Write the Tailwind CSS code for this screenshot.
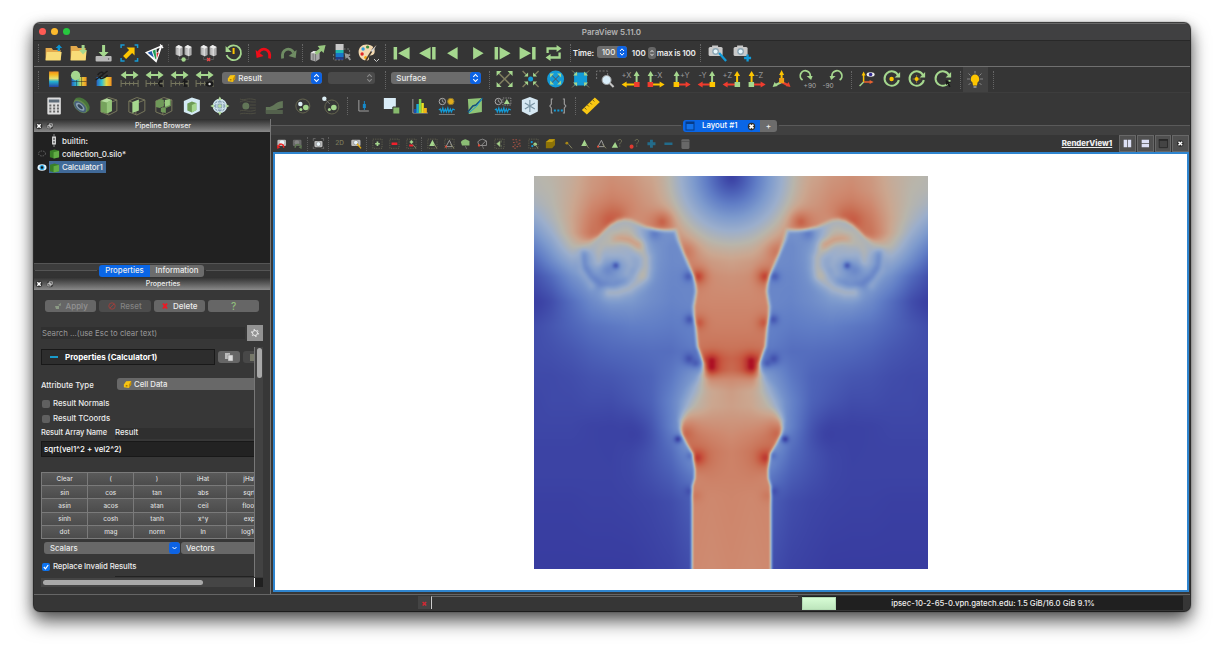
<!DOCTYPE html>
<html lang="en">
<head>
<meta charset="utf-8">
<title>ParaView 5.11.0</title>
<script src="https://cdn.jsdelivr.net/npm/@tailwindcss/browser@4"></script>
</head>
<body class="h-[656px] w-[1224px] overflow-hidden bg-white font-['Inter','Liberation_Sans',sans-serif] text-[8px] leading-none text-[#ececec]">
<svg class="absolute size-0">
<defs>
<linearGradient id="rb" x1="0" y1="0" x2="0" y2="1"><stop offset="0" stop-color="#f08a20"/><stop offset=".2" stop-color="#f5b820"/><stop offset=".45" stop-color="#e8e070"/><stop offset=".65" stop-color="#20b0d0"/><stop offset="1" stop-color="#2840a0"/></linearGradient>
<linearGradient id="rh" x1="0" y1="0" x2="1" y2="0"><stop offset="0" stop-color="#2860c0"/><stop offset=".35" stop-color="#30c0d0"/><stop offset=".65" stop-color="#e8d840"/><stop offset="1" stop-color="#f09020"/></linearGradient>
<symbol id="open" viewBox="0 0 20 20"><path d="M2 5h6l1.500 2H17v10H2z" fill="#e3a94c"/><path d="M3 9h15l-1 8.500H2z" fill="#f8dc78"/><path d="M15.500 1.500l3 3.500h-2v3h-2.500V5h-2z" fill="#0c93d2"/></symbol>
<symbol id="load" viewBox="0 0 20 20"><path d="M2 3h6l1.500 2H17v12H2z" fill="#e3a94c"/><path d="M3 8h15l-1 9.500H2z" fill="#f8dc78"/><path d="M13 2h3v5h2.500l-4 4.500-4-4.500H13z" fill="#a5d78e"/></symbol>
<symbol id="save" viewBox="0 0 20 20"><rect x="2" y="13" width="16" height="5.500" rx="1" fill="#b9b9b9"/><circle cx="15" cy="16" r=".8" fill="#555"/><path d="M8.500 2h3v7H15l-5 5-5-5h3.500z" fill="#a5d78e"/></symbol>
<symbol id="capt" viewBox="0 0 20 20"><path d="M1.500 5V2H5M15 2h3v3M18 15v3h-3M5 18H1.500v-3" fill="none" stroke="#179bd4" stroke-width="1.500"/><path d="M7 4.500h8v8l-2.500-2.500-6 6L3.500 13l6-6z" fill="#fdc500"/></symbol>
<symbol id="logo" viewBox="0 0 20 20"><path d="M1.500 9.500L17 3l-5.500 15.500z" fill="#f2f2f2" stroke="#fff" stroke-width="1.300"/><path d="M3 9.800L7 8l2.200 6.500z" fill="#1c55a5"/><path d="M8 7.800l2.900-1.200.8 10-1-.8z" fill="#1d9e56"/><path d="M12 6l3-1-1.700 4.200-1.200.2z" fill="#222"/><path d="M12 10l.2 5.500 2-6z" fill="#d52b2b"/><path d="M15.500 1.500l3 3.500" stroke="#fff" stroke-width="1.200"/></symbol>
<symbol id="serv" viewBox="0 0 20 20"><path d="M2 4l3-2 4 2v8l-3 1.500-4-2zM11 4l3-2 4 2v8l-3 1.500-4-2z" fill="#aeaeae"/><path d="M2 4l4 2 3-2-4-2zM11 4l4 2 3-2-4-2z" fill="#eee"/><path d="M4.500 6v6M6 6v7M13.500 6v6M15 6v7" stroke="#ddd"/><path d="M5 14v2.500h10V14" fill="none" stroke="#555"/></symbol>
<symbol id="conn" viewBox="0 0 20 20"><use href="#serv"/><circle cx="10" cy="16.500" r="2.200" fill="#a5d78e"/></symbol>
<symbol id="disc" viewBox="0 0 20 20"><use href="#serv"/><path d="M8.500 15l3 3M11.500 15l-3 3" stroke="#e74949" stroke-width="1.500"/></symbol>
<symbol id="hist" viewBox="0 0 20 20"><path d="M4.200 5.200A7.400 7.400 0 1 1 3 12" fill="none" stroke="#a5d78e" stroke-width="1.800"/><path d="M2 3v6h6z" fill="#a5d78e"/><path d="M10 5v6" stroke="#fdc500" stroke-width="2"/></symbol>
<symbol id="undo" viewBox="0 0 20 20"><path d="M5 9.500C8 4 17.500 5 16 15.500" fill="none" stroke="#f00c18" stroke-width="2.800"/><path d="M2 7l1 8 7-2z" fill="#f00c18"/></symbol>
<symbol id="redo" viewBox="0 0 20 20"><path d="M15 9.500C12 4 2.500 5 4 15.500" fill="none" stroke="#6f8c63" stroke-width="2.800"/><path d="M18 7l-1 8-7-2z" fill="#6f8c63"/></symbol>
<symbol id="extr" viewBox="0 0 20 20"><path d="M3 10l3-2 6 1v7l-4 2.500-5-1.500z" fill="#a9a9a9"/><path d="M3 10l3-2 6 1-4 1.500z" fill="#e8e8e8"/><path d="M5.500 10.500v7M8 11v7" stroke="#777"/><path d="M10 3l8-1-2 8-2-2-5 4-2-2.500 5-4z" fill="#97c67f"/></symbol>
<symbol id="sel" viewBox="0 0 20 20"><path d="M3 1h8v6H3z" fill="#c9c9c9"/><path d="M3 7h8v3H3z" fill="#20b8b0"/><path d="M3 10h8v4H3z" fill="#1876c8"/><path d="M3 14h8v3H3z" fill="#243d85"/><path d="M11 6h6v10M1 11v6h9" stroke="#777" fill="none" stroke-dasharray="2 1.500"/><path d="M12 10l6 2-2 1.500 2.500 3-1.500 1-2.500-3-1.500 1.500z" fill="#999"/></symbol>
<symbol id="pal" viewBox="0 0 20 20"><path d="M9 1.500c6 0 9 4 8 8s-5 2-5.500 4 1 4-3 4C4 17.500 1 13 1 9s3-7.500 8-7.500z" fill="#f3d9b1"/><circle cx="5.500" cy="6" r="1.700" fill="#2e9ee0"/><circle cx="10" cy="4" r="1.600" fill="#3e8f3e"/><circle cx="4.500" cy="11" r="1.700" fill="#e02626"/><circle cx="8" cy="14.500" r="1.500" fill="#f0a010"/><path d="M18 2l-7 11-3 5" stroke="#463b30" stroke-width="1.500"/><path d="M19 2l-4 7-2-1z" fill="#ddd"/></symbol>
<symbol id="first" viewBox="0 0 20 20"><path d="M2 4h3.500v12.500H2zM18 4v12.500L6.500 10.300z" fill="#a5d78e"/></symbol>
<symbol id="back" viewBox="0 0 20 20"><path d="M14.500 4h3.500v12.500h-3.500zM13 4v12.500L1.500 10.300z" fill="#a5d78e"/></symbol>
<symbol id="prev" viewBox="0 0 20 20"><path d="M15 4v12.500L4.500 10.300z" fill="#a5d78e"/></symbol>
<symbol id="play" viewBox="0 0 20 20"><path d="M5.500 4v12.500L16 10.300z" fill="#a5d78e"/></symbol>
<symbol id="fwd" viewBox="0 0 20 20"><path d="M2 4h3.500v12.500H2zM7 4v12.500l11-6.200z" fill="#a5d78e"/></symbol>
<symbol id="last" viewBox="0 0 20 20"><path d="M14.500 4H18v12.500h-3.500zM2 4v12.500l11.500-6.200z" fill="#a5d78e"/></symbol>
<symbol id="loop" viewBox="0 0 20 20"><path d="M4 10V5.500H14M16 9.500V14.500H6" fill="none" stroke="#a5d78e" stroke-width="2.300"/><path d="M13 2l5 3.500L13 9zM7 11l-5 3.500L7 18z" fill="#a5d78e"/></symbol>
<symbol id="cam" viewBox="0 0 20 20"><rect x="1" y="4" width="14" height="9" rx="1.500" fill="#c9c9c9"/><rect x="4.500" y="2.500" width="6" height="3" fill="#c9c9c9"/><circle cx="8" cy="8.500" r="3.400" fill="#8ea7b5"/><circle cx="8" cy="8.500" r="2" fill="#e7f7fc"/></symbol>
<symbol id="camw" viewBox="0 0 20 20"><use href="#cam"/><path d="M11.500 10l7 8" stroke="#129bd8" stroke-width="2.300"/></symbol>
<symbol id="camp" viewBox="0 0 20 20"><use href="#cam"/><path d="M15 11.500v7M11.500 15h7" stroke="#129bd8" stroke-width="2.300"/></symbol>
<symbol id="cbar" viewBox="0 0 20 20"><rect x="5.500" y="2.500" width="9.500" height="15.500" fill="url(#rb)"/></symbol>
<symbol id="cedit" viewBox="0 0 20 20"><path d="M3 8h15v9H3z" fill="url(#rh)"/><path d="M3 12.500h15M8 8v9M13 8v9" stroke="#222" stroke-width=".5"/><circle cx="7" cy="6.500" r="4.700" fill="#a5d78e"/></symbol>
<symbol id="csep" viewBox="0 0 20 20"><path d="M3 8h15v9H3z" fill="url(#rh)"/><path d="M2 11l12-9M4 6c4-5 8-2 4 1s1 4 6-1" stroke="#1c1c1c" stroke-width="1.500" fill="none"/></symbol>
<symbol id="resc" viewBox="0 0 20 20"><path d="M4 6h12" stroke="#a5d78e" stroke-width="2"/><path d="M6.500 2v8L1 6zM13.500 2v8L19 6z" fill="#a5d78e"/><path d="M1.500 11v7M1.500 14.500h17M18.500 11v7M6 12.500v4M10 12.500v4M14 12.500v4" stroke="#77775e" fill="none"/></symbol>
<symbol id="rescc" viewBox="0 0 20 20"><use href="#resc"/><path d="M18 12c-5-1-5 6 0 5" stroke="#191919" stroke-width="1.800" fill="none"/></symbol>
<symbol id="resct" viewBox="0 0 20 20"><use href="#resc"/><path d="M15 10v7h3M13 12.500h5" stroke="#191919" stroke-width="1.700" fill="none"/></symbol>
<symbol id="rescv" viewBox="0 0 20 20"><use href="#resc"/><ellipse cx="15" cy="15" rx="4" ry="2.700" fill="#191919"/><circle cx="15" cy="15" r="1.200" fill="#ddd"/></symbol>
<symbol id="cube" viewBox="0 0 10 10"><path d="M1 5l2.500-3.500L9 1v4L6.500 9 1 8z" fill="#f8c513"/><path d="M6.500 9V5.300L9 1v4z" fill="#c78e05"/><path d="M3 5.500h2v1.800H3z" fill="#b07c00"/></symbol>
<symbol id="updn" viewBox="0 0 10 10"><path d="M3 4l2-2.200L7 4M3 6l2 2.200L7 6" fill="none" stroke="#fff" stroke-width="1"/></symbol>
<symbol id="updg" viewBox="0 0 10 10"><path d="M3 4l2-2.200L7 4M3 6l2 2.200L7 6" fill="none" stroke="#8a8a8a" stroke-width="1"/></symbol>
<symbol id="reset" viewBox="0 0 20 20"><path d="M4 4l12 12M16 4L4 16" stroke="#807e60" stroke-width="1.500"/><path d="M2 2h5L2 7zM18 2v5l-5-5zM2 18v-5l5 5zM18 18h-5l5-5z" fill="#a5d78e"/></symbol>
<symbol id="zdata" viewBox="0 0 20 20"><path d="M2 2l5 5M18 2l-5 5M2 18l5-5M18 18l-5-5" stroke="#807e60" stroke-width="1.400"/><path d="M7.500 7.500V3.500L3.500 7.500zM12.500 7.500h4l-4-4zM7.500 12.500h-4l4 4zM12.500 12.500v4l4-4z" fill="#a5d78e"/><circle cx="10" cy="10" r="2.500" fill="#139bd7"/></symbol>
<symbol id="rclose" viewBox="0 0 20 20"><circle cx="10" cy="10" r="8.500" fill="#139bd7"/><path d="M6 6l8 8M14 6l-8 8" stroke="#555"/><path d="M4.500 4.500h4l-4 4zM15.500 4.500v4l-4-4zM4.500 15.500v-4l4 4zM15.500 15.500h-4l4-4z" fill="#a5d78e"/></symbol>
<symbol id="zclose" viewBox="0 0 20 20"><rect x="3.500" y="3.500" width="13" height="13" fill="#139bd7"/><path d="M1.500 1.500l5 5M18.500 1.500l-5 5M1.500 18.500l5-5M18.500 18.500l-5-5" stroke="#807e60"/><path d="M6.500 6.500V2.500L2.500 6.500zM13.500 6.500h4l-4-4zM6.500 13.500h-4l4 4zM13.500 13.500v4l4-4z" fill="#a5d78e"/></symbol>
<symbol id="lens" viewBox="0 0 20 20"><path d="M1 10V2h11v4" fill="none" stroke="#777" stroke-dasharray="2 1.500"/><path d="M14 14l4 4" stroke="#c5c5c5" stroke-width="2"/><circle cx="11" cy="11" r="4.500" fill="#d9eefa" stroke="#a3a3a3"/></symbol>
<symbol id="tri" viewBox="0 0 20 20"><path d="M10 13V4" stroke="#fdc500" stroke-width="2"/><path d="M7.500 6L10 1l2.500 5z" fill="#fdc500"/><path d="M10 13l-6 3" stroke="#a5d78e" stroke-width="2.500"/><path d="M1 18l2-5 3 4z" fill="#a5d78e"/><path d="M10 13l6 3" stroke="#e9422d" stroke-width="2.500"/><path d="M19 18l-2-5-3 4z" fill="#e9422d"/><rect x="7.500" y="9" width="5" height="5" fill="#eea015"/></symbol>
<symbol id="rotp" viewBox="0 0 20 20"><path d="M5 11A5 5 0 1 1 12.500 8" fill="none" stroke="#a5d78e" stroke-width="1.800"/><path d="M9 7h6l-1.500 4z" fill="#a5d78e"/><text x="6" y="19" font-size="6.500" fill="#aaa" class="font-['Inter']">+90</text></symbol>
<symbol id="rotm" viewBox="0 0 20 20"><path d="M15 11A5 5 0 1 0 7.500 8" fill="none" stroke="#a5d78e" stroke-width="1.800" transform="translate(2)"/><path d="M13 7H7l1.500 4z" fill="#a5d78e"/><text x="0" y="19" font-size="6.500" fill="#aaa" class="font-['Inter']">-90</text></symbol>
<symbol id="axes" viewBox="0 0 20 20"><path d="M7 13V5" stroke="#fdc500" stroke-width="1.500"/><path d="M5 6.500l2-4 2 4z" fill="#fdc500"/><path d="M7 13h7" stroke="#e96030" stroke-width="1.500"/><path d="M13 11l4 2-4 2z" fill="#e96030"/><path d="M7 13l-4 4" stroke="#a5d78e" stroke-width="1.500"/><ellipse cx="14" cy="5.500" rx="4" ry="2.200" fill="#eee"/><circle cx="14" cy="5.500" r="1.800" fill="#302890"/></symbol>
<symbol id="circ" viewBox="0 0 20 20"><path d="M16.700 6.500A7.200 7.200 0 1 0 17.200 11" fill="none" stroke="#a5d78e" stroke-width="2"/><path d="M18.500 3v5.500H13z" fill="#a5d78e"/></symbol>
<symbol id="circd" viewBox="0 0 20 20"><use href="#circ"/><circle cx="10" cy="10" r="2.200" fill="#fdc500"/></symbol>
<symbol id="circc" viewBox="0 0 20 20"><use href="#circ"/><path d="M10 6v8M6 10h8" stroke="#8e7d3a"/><circle cx="10" cy="10" r="2" fill="#fdc500"/></symbol>
<symbol id="circp" viewBox="0 0 20 20"><use href="#circ"/><path d="M13 11l5.500 2.500-2 1 1.500 3-1.500.5-1.500-3-1.500 1z" fill="#181818"/></symbol>
<symbol id="bulb" viewBox="0 0 20 20"><path d="M10 1v2.500M2 9h3M15 9h3M3.500 3.500l2 2M16.500 3.500l-2 2M3.500 15l2-2M16.500 15l-2-2" stroke="#868686"/><path d="M10 4.500a4.500 4.500 0 0 1 2.500 8l-.5 3H8l-.5-3a4.500 4.500 0 0 1 2.500-8z" fill="#fdc500"/><path d="M8.500 16h3v2h-3z" fill="#888"/></symbol>
<symbol id="calc" viewBox="0 0 20 20"><rect x="3.500" y="1.500" width="13.500" height="17" rx="1" fill="#ddd"/><rect x="5" y="3.500" width="10.500" height="3" fill="#5d6b78"/><path d="M5.500 9.500h10M5.500 12.500h10M5.500 15.500h10" stroke="#666" stroke-width="2" stroke-dasharray="2 1.800"/></symbol>
<symbol id="cont" viewBox="0 0 20 20"><g transform="rotate(42 10 10)"><ellipse cx="10" cy="8.500" rx="9" ry="6" fill="#48753b"/><ellipse cx="10" cy="10.500" rx="8.500" ry="5" fill="#66884f"/><ellipse cx="10" cy="11" rx="7.300" ry="4" fill="#47617a"/><ellipse cx="10" cy="11" rx="5.200" ry="2.700" fill="#8ba2b2"/><ellipse cx="10" cy="11" rx="3.200" ry="1.500" fill="#345"/></g></symbol>
<symbol id="wire" viewBox="0 0 20 20"><path d="M2 5l8-3.500 8 2.500v11l-8 4L2 16zM2 5l7 2.500L18 4M9 7.500V19" fill="none" stroke="#77775c"/></symbol>
<symbol id="clip" viewBox="0 0 20 20"><use href="#wire"/><path d="M2 5l6-2.500L13 4v11l-5 2.500L2 16z" fill="#76a35d"/><path d="M2 5l6-2.500L13 4 8 6.500z" fill="#b5dc9f"/><path d="M8 6.500L13 4v11l-5 2.500z" fill="#96c67c"/></symbol>
<symbol id="slice" viewBox="0 0 20 20"><use href="#wire"/><path d="M5.500 6l6.500-2.500v11L5.500 17z" fill="#a5d78e"/></symbol>
<symbol id="thr" viewBox="0 0 20 20"><use href="#wire"/><path d="M2 5l5-2 3 1v6l-4 2-4-1zM11 6l6-2v6l-5 2zM7 12l5-1v6l-5-1z" fill="#6f9959"/><path d="M11 4l5-1v6l-5 2z" fill="#9acb80"/></symbol>
<symbol id="sub" viewBox="0 0 20 20"><path d="M2 5l8-3.500 8 2.500v11l-8 4L2 16z" fill="#d4eaf4"/><path d="M5.500 7.500l4.500-2 4.500 1.500V14L10 16.500 5.500 14.500z" fill="#6d9b55"/><path d="M10 9l4.500-2V14L10 16.500z" fill="#a5d78e"/></symbol>
<symbol id="glyph" viewBox="0 0 20 20"><circle cx="10" cy="10" r="7" fill="#8aa5b6"/><circle cx="10" cy="10" r="6.500" fill="none" stroke="#d6e8f0" stroke-width="1.300"/><ellipse cx="10" cy="10" rx="3" ry="6.500" fill="none" stroke="#d6e8f0"/><ellipse cx="10" cy="10" rx="6.500" ry="3" fill="none" stroke="#d6e8f0"/><path d="M10 .5l2 3.500H8zM10 19.500L12 16H8zM.5 10L4 8v4zM19.500 10L16 8v4z" fill="#b5dc9f"/><circle cx="10" cy="10" r="1.800" fill="#b5dc9f"/></symbol>
<symbol id="strm" viewBox="0 0 20 20"><path d="M2 3c5 2 8-2 16 1M2 6c2-1 5-2 7-1s5 1 9 1M12 9h6M12 12h6M2 15c5-2 8 2 16-1M2 18c6-2 8 1 16-1" fill="none" stroke="#505044" stroke-width=".9"/><circle cx="8" cy="10" r="3.500" fill="#627658"/></symbol>
<symbol id="warp" viewBox="0 0 20 20"><path d="M1 11c8 1 8-5 17-6v7c-6 0-9 6-17 5z" fill="#627658"/><path d="M1 14h17v4H1z" fill="#54614d"/></symbol>
<symbol id="grp" viewBox="0 0 20 20"><circle cx="10" cy="10" r="7" fill="none" stroke="#65654f"/><circle cx="7.500" cy="8" r="2.200" fill="#dceef5"/><circle cx="13" cy="11.500" r="2.800" fill="#a5d78e"/><circle cx="8" cy="13.500" r="1.500" fill="#a5d78e"/></symbol>
<symbol id="exl" viewBox="0 0 20 20"><circle cx="11" cy="11" r="7" fill="none" stroke="#65654f"/><path d="M4 3l5 5" stroke="#777"/><circle cx="3.500" cy="2.800" r="2.200" fill="#dceef5"/><circle cx="13" cy="11.500" r="2.800" fill="#a5d78e"/><circle cx="8.500" cy="13.500" r="1.500" fill="#a5d78e"/></symbol>
<symbol id="plot" viewBox="0 0 20 20"><path d="M5 4v11h10" fill="none" stroke="#aaa" stroke-width=".9"/><path d="M10.500 5v9" stroke="#168acb"/><path d="M9 8h3v4H9z" fill="#168acb"/></symbol>
<symbol id="over" viewBox="0 0 20 20"><path d="M2 2h12v11H2z" fill="#d9ecf7"/><path d="M11 11h7v7h-7z" fill="#86b96c" stroke="#363636"/></symbol>
<symbol id="bars" viewBox="0 0 20 20"><path d="M3 3v14h15" stroke="#999" fill="none"/><path d="M4 13h2.500v4H4z" fill="#1b50b0"/><path d="M6.500 8H9v9H6.500z" fill="#18a9d8"/><path d="M9 3h2.500v14H9z" fill="#85d850"/><path d="M11.500 7H14v10h-2.500z" fill="#e8e020"/><path d="M14 12h3v5h-3z" fill="#f5ae18"/></symbol>
<symbol id="wav" viewBox="0 0 20 20"><path d="M2 14l1.500-1 1 3 1.500-4 1 4 1.500-3 1 3 1.500-4 1 4 1.500-3 1 3 1.500-3 2 1" fill="none" stroke="#139bd7" stroke-width="1.200"/><path d="M2 18.500h16" stroke="#777"/><circle cx="5.500" cy="5.500" r="3.200" fill="none" stroke="#aaa"/><path d="M5.500 3.500v2l2 1" stroke="#aaa" fill="none" stroke-width=".8"/></symbol>
<symbol id="pot" viewBox="0 0 20 20"><use href="#wav"/><circle cx="14" cy="5.500" r="3.200" fill="#e1ac1c" stroke="#8b762c"/></symbol>
<symbol id="pots" viewBox="0 0 20 20"><use href="#wav"/><path d="M10 2h8v7h-8z" fill="none" stroke="#888" stroke-dasharray="1.500 1"/><path d="M14 3l3 5h-6z" fill="#a5d78e"/></symbol>
<symbol id="pol" viewBox="0 0 20 20"><path d="M3 3l14-1v14l-13 2z" fill="#8fc476"/><path d="M3 16l5-6 3-1 7-7" stroke="#164f7b" stroke-width="1.500" fill="none"/><path d="M4 17l8-7 5-7" stroke="#209cd5" fill="none"/></symbol>
<symbol id="hex" viewBox="0 0 20 20"><path d="M2 4L10 1l8 3v11.500L10 19.500 2 15.500z" fill="#d6e8f3"/><path d="M10 4v12M5 7l10 6M15 7L5 13" stroke="#7b96a6" stroke-width="1.200"/></symbol>
<symbol id="brace" viewBox="0 0 20 20"><path d="M5 3H3.500v5L2 10l1.500 2v5H5M15 3h1.500v5l1.500 2-1.500 2v5H15" fill="none" stroke="#999" stroke-width="1.200"/><path d="M6 14.500h9" stroke="#139bd7" stroke-width="2" stroke-dasharray="2 1.500"/></symbol>
<symbol id="ruler" viewBox="0 0 20 20"><path d="M14 1.500L19 6 6 18.500 1 14z" fill="#f8c713"/><path d="M3.500 11.500l2 2M6.500 9l1.500 1.500M9 6.500l2 2M12 4l1.500 1.500" stroke="#6b5914"/></symbol>
<symbol id="box" viewBox="0 0 20 20"><rect x="2" y="2" width="16" height="16" fill="none" stroke="#7d7d60" stroke-dasharray="2 2"/></symbol>
<symbol id="pt" viewBox="0 0 20 20"><path d="M12 11l6 7" stroke="#8a8a68" stroke-width="1.600"/></symbol>
<symbol id="tg" viewBox="0 0 20 20"><path d="M10 3l5.500 11h-11z" fill="#a5d78e"/></symbol>
<symbol id="to" viewBox="0 0 20 20"><path d="M10 4l5 11H4z" fill="none" stroke="#aaa" stroke-width="1.500"/><circle cx="4" cy="15" r="1.800" fill="#dd4a36"/></symbol>
<symbol id="q" viewBox="0 0 20 20"><path d="M11 5c1-4 7-3 6 1 0 2-3 2-3 5M14 13v2" fill="none" stroke="#77775c" stroke-width="1.600"/></symbol>
<symbol id="pcube" viewBox="0 0 12 12"><path d="M1 3l5-1.500L11 3v7l-5 1.500L1 10z" fill="#397f28"/><path d="M5 4.500L11 3v7l-6 1.500z" fill="#62ad45"/></symbol>
<symbol id="cx" viewBox="0 0 8 8"><circle cx="4" cy="4" r="3.300" fill="#2e2e2e"/><path d="M2.300 2.300l3.400 3.400M5.700 2.300L2.300 5.700" stroke="#fff" stroke-width="1.500"/></symbol>
<symbol id="cf" viewBox="0 0 8 8"><circle cx="4" cy="4" r="3.300" fill="#383838"/><path d="M3.300 1.800h3v2.600h-3zM1.800 3.400h3V6h-3z" fill="#444" stroke="#ddd" stroke-width=".7"/></symbol>
</defs>
</svg>

<div class="pt-[23px] pl-[34px]">
<main class="flex h-[588px] w-[1156px] flex-col overflow-hidden rounded-[6px] bg-[#373737] shadow-[0_0_1px_1px_rgba(0,0,0,.8),0_10px_19px_rgba(0,0,0,.6),0_4px_14px_rgba(0,0,0,.3)]">
<header class="flex h-[17px] shrink-0 items-center border-t border-[#686868] bg-[#404041] px-[5px] pb-px">
<div class="flex w-[100px] gap-[5px]"><i class="size-[7px] rounded-full bg-[#ff5b54]"></i><i class="size-[7px] rounded-full bg-[#fdba2d]"></i><i class="size-[7px] rounded-full bg-[#27c83f]"></i></div>
<h1 class="mr-[101px] flex-1 text-center text-[8px] font-semibold text-[#b4b4b4]">ParaView 5.11.0</h1>
</header>

<nav class="flex h-[26px] shrink-0 items-center border-t border-[#282828] bg-[#353535] pb-[2px] [&>svg]:h-5 [&>svg]:w-[25.2px] [&>svg]:shrink-0">
<i class="mr-[2px] ml-[4px] h-[18px] w-px border-l border-dotted border-[#666]"></i>
<svg><use href="#open"/></svg><svg><use href="#load"/></svg><svg><use href="#save"/></svg><svg><use href="#capt"/></svg><svg><use href="#logo"/></svg>
<i class="mr-[2px] ml-px h-[18px] w-px border-l border-dotted border-[#555]"></i>
<svg><use href="#conn"/></svg><svg><use href="#disc"/></svg><svg><use href="#hist"/></svg>
<i class="mr-[2px] ml-px h-[18px] w-px border-l border-dotted border-[#666]"></i>
<svg><use href="#undo"/></svg><svg><use href="#redo"/></svg>
<i class="mr-[2px] ml-px h-[18px] w-px border-l border-dotted border-[#666]"></i>
<svg><use href="#extr"/></svg><svg><use href="#sel"/></svg><svg><use href="#pal"/></svg>
<svg class="-ml-[7px] !h-[7px] !w-[7px] self-end" viewBox="0 0 7 7"><path d="M1 2l2.500 2.500L6 2" stroke="#ccc" fill="none"/></svg>
<i class="mr-[3px] ml-[5px] h-[18px] w-px border-l border-dotted border-[#666]"></i>
<svg><use href="#first"/></svg><svg><use href="#back"/></svg><svg><use href="#prev"/></svg><svg><use href="#play"/></svg><svg><use href="#fwd"/></svg><svg><use href="#last"/></svg><svg><use href="#loop"/></svg>
<i class="ml-[4px] h-[18px] w-px border-l border-dotted border-[#666]"></i>
<span class="ml-[2px] w-[24px] tracking-[-.15px] font-semibold text-[#eee]">Time:</span>
<div class="-mt-px flex h-[12px] w-[30px] shrink-0 items-center justify-between overflow-hidden rounded-[3px] bg-[#6d6d6d] pl-[5px] font-medium">100<svg class="h-[12px] w-[10px] rounded-[3px] bg-[#0d63e4]"><use href="#updn"/></svg></div>
<span class="ml-[5px] w-[15px] font-semibold">100</span>
<svg class="ml-px !h-[12px] !w-[8px] rounded-[3px] bg-[#666]"><use href="#updn"/></svg>
<span class="ml-[1px] w-[43px] font-semibold tracking-tight whitespace-nowrap">max is 100</span>
<i class="mr-[4px] h-[18px] w-px border-l border-dotted border-[#666]"></i>
<svg><use href="#camw"/></svg><svg><use href="#camp"/></svg>
</nav>

<nav class="flex h-[27px] shrink-0 items-center border-y border-t-[#707070] border-b-[#3d3d3d] bg-[#353535] [&>svg]:-mt-px [&>svg]:h-5 [&>svg]:w-[25.2px] [&>svg]:shrink-0">
<i class="mr-[2px] ml-[4px] h-[18px] w-px border-l border-dotted border-[#666]"></i>
<svg><use href="#cbar"/></svg><svg><use href="#cedit"/></svg><svg><use href="#csep"/></svg><svg><use href="#resc"/></svg><svg><use href="#rescc"/></svg><svg><use href="#resct"/></svg><svg><use href="#rescv"/></svg>
<div class="-mt-[3px] ml-[5px] flex h-[12px] w-[100px] shrink-0 items-center overflow-hidden rounded-[3px] bg-[#6b6b6b] pl-[5px] font-medium"><svg class="mr-[2px] size-[9px]"><use href="#cube"/></svg>Result<svg class="ml-auto h-[12px] w-[11px] rounded-[3px] bg-[#0d63e4]"><use href="#updn"/></svg></div>
<div class="-mt-[3px] ml-[6px] flex h-[12px] w-[47px] shrink-0 items-center justify-end rounded-[3px] bg-[#4a4a4a]"><svg class="h-[12px] w-[11px]"><use href="#updg"/></svg></div>
<i class="mr-[5px] ml-[10px] h-[18px] w-px border-l border-dotted border-[#666]"></i>
<div class="-mt-[3px] flex h-[12px] w-[90px] shrink-0 items-center justify-between overflow-hidden rounded-[3px] bg-[#6b6b6b] pl-[5px] font-medium">Surface<svg class="h-[12px] w-[11px] rounded-[3px] bg-[#0d63e4]"><use href="#updn"/></svg></div>
<i class="mr-[2px] ml-[8px] h-[18px] w-px border-l border-dotted border-[#666]"></i>
<svg><use href="#reset"/></svg><svg><use href="#zdata"/></svg><svg><use href="#rclose"/></svg><svg><use href="#zclose"/></svg><svg><use href="#lens"/></svg>
<svg viewBox="0 0 20 20"><text x="1" y="8.500" font-size="7.500" fill="#999">+X</text><path d="M16 16V6" stroke="#a5d78e" stroke-width="2"/><path d="M13 7l3-5 3 5z" fill="#a5d78e"/><path d="M16 15.500H5" stroke="#fdc500" stroke-width="2"/><path d="M6 12.500v6l-5-3z" fill="#fdc500"/><path d="M13.500 13h5.500v5h-5.500z" fill="#f03c2e"/></svg>
<svg viewBox="0 0 20 20"><text x="8.500" y="8.500" font-size="7.500" fill="#999">-X</text><path d="M5 16V6" stroke="#a5d78e" stroke-width="2"/><path d="M2 7l3-5 3 5z" fill="#a5d78e"/><path d="M5 15.500h10" stroke="#fdc500" stroke-width="2"/><path d="M14 12.500v6l5-3z" fill="#fdc500"/><path d="M2 13h5.500v5H2z" fill="#f03c2e"/></svg>
<svg viewBox="0 0 20 20"><text x="8.500" y="8.500" font-size="7.500" fill="#999">+Y</text><path d="M5 16V6" stroke="#a5d78e" stroke-width="2"/><path d="M2 7l3-5 3 5z" fill="#a5d78e"/><path d="M5 15.500h10" stroke="#f03c2e" stroke-width="2"/><path d="M14 12.500v6l5-3z" fill="#f03c2e"/><path d="M2 13h5.500v5H2z" fill="#fdc500"/></svg>
<svg viewBox="0 0 20 20"><text x="2" y="8.500" font-size="7.500" fill="#999">-Y</text><path d="M15.500 16V6" stroke="#a5d78e" stroke-width="2"/><path d="M12.500 7l3-5 3 5z" fill="#a5d78e"/><path d="M15.500 15.500H5" stroke="#f03c2e" stroke-width="2"/><path d="M6 12.500v6l-5-3z" fill="#f03c2e"/><path d="M13 13h5.500v5H13z" fill="#fdc500"/></svg>
<svg viewBox="0 0 20 20"><text x="1" y="8.500" font-size="7.500" fill="#999">+Z</text><path d="M15.500 16V6" stroke="#fdc500" stroke-width="2"/><path d="M12.500 7l3-5 3 5z" fill="#fdc500"/><path d="M15.500 15.500H5" stroke="#f03c2e" stroke-width="2"/><path d="M6 12.500v6l-5-3z" fill="#f03c2e"/><path d="M13 13h5.500v5H13z" fill="#a5d78e"/></svg>
<svg viewBox="0 0 20 20"><text x="8.500" y="8.500" font-size="7.500" fill="#999">-Z</text><path d="M5 16V6" stroke="#fdc500" stroke-width="2"/><path d="M2 7l3-5 3 5z" fill="#fdc500"/><path d="M5 15.500h10" stroke="#f03c2e" stroke-width="2"/><path d="M14 12.500v6l5-3z" fill="#f03c2e"/><path d="M2 13h5.500v5H2z" fill="#a5d78e"/></svg>
<svg><use href="#tri"/></svg><svg><use href="#rotp"/></svg><svg><use href="#rotm"/></svg>
<i class="mr-[2px] ml-[6px] h-[18px] w-px border-l border-dotted border-[#666]"></i>
<svg><use href="#axes"/></svg><svg><use href="#circd"/></svg><svg><use href="#circc"/></svg><svg><use href="#circp"/></svg>
<i class="mr-[2px] ml-[5px] h-[18px] w-px border-l border-dotted border-[#666]"></i>
<div class="flex h-full w-[25px] items-center justify-center bg-[#424242]"><svg class="size-5"><use href="#bulb"/></svg></div>
<i class="ml-[5px] h-[18px] w-px border-l border-dotted border-[#666]"></i>
</nav>

<nav class="flex h-[26px] shrink-0 items-center pl-[5.700px] [&>svg]:h-5 [&>svg]:w-[27.7px] [&>svg]:shrink-0">
<svg><use href="#calc"/></svg><svg><use href="#cont"/></svg><svg><use href="#clip"/></svg><svg><use href="#slice"/></svg><svg><use href="#thr"/></svg><svg><use href="#sub"/></svg><svg><use href="#glyph"/></svg><svg><use href="#strm"/></svg><svg><use href="#warp"/></svg><svg><use href="#grp"/></svg><svg><use href="#exl"/></svg>
<i class="mr-[2px] ml-[3px] h-[18px] w-px border-l border-dotted border-[#666]"></i>
<svg><use href="#plot"/></svg><svg><use href="#over"/></svg><svg><use href="#bars"/></svg><svg><use href="#pot"/></svg><svg><use href="#pol"/></svg><svg><use href="#pots"/></svg><svg><use href="#hex"/></svg><svg><use href="#brace"/></svg>
<i class="mr-px ml-[3px] h-[18px] w-px border-l border-dotted border-[#666]"></i>
<svg><use href="#ruler"/></svg>
</nav>

<div class="flex h-[475px] shrink-0">
<aside class="flex w-[237px] shrink-0 flex-col border-r border-[#777]">
<div class="flex h-[13px] shrink-0 items-center gap-[3px] bg-linear-to-b from-[#2f2f2f] to-[#8a8a8a] px-px text-[7px]"><svg class="size-[8px]"><use href="#cx"/></svg><svg class="size-[8px]"><use href="#cf"/></svg><h2 class="flex-1 text-center font-medium">Pipeline Browser</h2></div>
<div class="flex h-[131px] shrink-0 flex-col bg-[#212121] pt-[2px] text-[8px] font-medium">
<div class="flex h-[13.300px] items-center"><svg class="mr-[3px] ml-[15px] h-[13px] w-[10px]" viewBox="0 0 10 13"><path d="M5 0v13" stroke="#aaa" stroke-width=".8"/><rect x="3" y="2.500" width="4" height="8" fill="#ccc"/><path d="M4 5h2M4 8h2" stroke="#333"/></svg>builtin:</div>
<div class="flex h-[13.300px] items-center"><svg class="ml-[3px] h-[9px] w-[10px]" viewBox="0 0 10 8"><ellipse cx="5" cy="4" rx="3.500" ry="2.500" fill="none" stroke="#666" stroke-dasharray="1.500 1"/></svg><svg class="mr-[2px] ml-[2px] size-[11px]"><use href="#pcube"/></svg><span class="tracking-[-.06px]">collection_0.silo*</span></div>
<div class="flex h-[13.300px] items-center"><svg class="ml-[3px] h-[9px] w-[10px]" viewBox="0 0 10 8"><ellipse cx="5" cy="4" rx="4.500" ry="3.200" fill="#e6f5ff"/><circle cx="5" cy="4" r="2.500" fill="#27a5e0"/><circle cx="5" cy="4" r="1.200" fill="#111"/></svg><span class="ml-[2px] flex h-[12px] w-[57px] items-center bg-[#416a99] tracking-[-.15px]"><svg class="mr-[2px] size-[11px]"><use href="#pcube"/></svg>Calculator1</span></div>
</div>
<div class="flex h-[14px] shrink-0 items-start border-t border-[#555] bg-linear-to-b from-[#3c3c3c] from-50% to-[#333] to-50% pt-px font-medium">
<i class="mt-[5px] ml-px h-px w-[62px] bg-[#555]"></i><span class="ml-[2px] flex h-[12px] w-[51px] items-center justify-center rounded-l-[3px] bg-[#0a66e6] text-[7.800px]">Properties</span><span class="flex h-[12px] w-[54px] items-center justify-center rounded-r-[3px] bg-[#6c6c6c] text-[7.800px]">Information</span><i class="mt-[5px] ml-[2px] h-px flex-1 bg-[#555]"></i>
</div>
<div class="flex h-[13px] shrink-0 items-center gap-[3px] bg-linear-to-b from-[#2f2f2f] to-[#8a8a8a] px-px text-[7px]"><svg class="size-[8px]"><use href="#cx"/></svg><svg class="size-[8px]"><use href="#cf"/></svg><h2 class="flex-1 text-center font-medium">Properties</h2></div>

<div class="mt-[10px] ml-[11px] flex h-[12px] shrink-0 gap-[3px] font-medium [&>span]:flex [&>span]:w-[51.300px] [&>span]:items-center [&>span]:justify-center [&>span]:gap-[4px] [&>span]:rounded-[3px]">
<span class="bg-[#666] text-[#939393]"><svg class="size-[8px]" viewBox="0 0 8 8"><path d="M1 4h4v3H2zM4 3l3-2-.5 3z" fill="#8c9b85"/></svg>Apply</span>
<span class="bg-[#4c4c4c] text-[#828282]"><svg class="size-[8px]" viewBox="0 0 8 8"><circle cx="4" cy="4" r="3.200" fill="none" stroke="#99403d"/><path d="M6 2L2 6" stroke="#99403d"/></svg>Reset</span>
<span class="bg-[#666]"><svg class="size-[8px]" viewBox="0 0 8 8"><path d="M2 1.500l4 5M6 1.500l-4 5" stroke="#f01722" stroke-width="2"/></svg>Delete</span>
<span class="bg-[#666] text-[10px] text-[#8fbc7b]">?</span>
</div>
<div class="mt-[13px] ml-[7px] flex h-[16px] shrink-0 items-center"><div class="flex h-[12px] w-[204px] items-center bg-[#303030] pt-px pl-px text-[7.800px] text-[#989898]">Search ...(use Esc to clear text)</div><svg class="ml-[2px] h-[16px] w-[16px] bg-[#929292]" viewBox="0 0 16 16"><circle cx="8" cy="8" r="2.500" fill="none" stroke="#eee"/><circle cx="8" cy="8" r="3.600" fill="none" stroke="#eee" stroke-dasharray="1.500 2.270"/></svg></div>

<div class="mt-[6px] ml-[7px] flex h-[240px] w-[222px] shrink-0 flex-wrap">
<div class="flex h-[230px] w-[213px] flex-col overflow-hidden text-[7.800px] font-medium">
<div class="mt-[2px] flex h-[16px] w-[400px] shrink-0 items-center"><h3 class="flex h-[16px] w-[174px] items-center border border-[#191919] bg-[#2d2d2d] pl-[8px] text-[8px] font-bold text-white"><i class="mr-[7px] h-[2px] w-[8px] bg-[#199bcb]"></i>Properties (Calculator1)</h3>
<svg class="ml-[3px] h-[12px] w-[22px] rounded-[3px] bg-[#666]" viewBox="0 0 22 12"><path d="M7 2h5v6H7z" fill="#bbb"/><path d="M10 4h5v6h-5z" fill="#ddd" stroke="#777" stroke-width=".5"/></svg><svg class="ml-[3px] h-[12px] w-[22px] rounded-[3px] bg-[#484848]" viewBox="0 0 22 12"><path d="M7 3h7v7H7z" fill="#77796a"/></svg></div>
<div class="mt-[12px] flex h-[14px] w-[300px] shrink-0 items-center"><span class="w-[76px] pt-[4px]">Attribute Type</span><span class="flex h-[12px] w-[180px] items-center rounded-[3px] bg-[#686868] pt-px pl-[6px]"><svg class="mr-[2px] size-[9px]"><use href="#cube"/></svg>Cell Data</span></div>
<div class="mt-[6px] flex h-[14px] shrink-0 items-center"><i class="mr-[3px] ml-px size-[8px] rounded-[2px] bg-[#606060]"></i>Result Normals</div>
<div class="flex h-[15px] shrink-0 items-center"><i class="mr-[3px] ml-px size-[8px] rounded-[2px] bg-[#606060]"></i>Result TCoords</div>
<div class="flex h-[14px] w-[300px] shrink-0 items-center"><span class="w-[74px] text-[7.500px] tracking-[-.05px] whitespace-nowrap">Result Array Name</span><span class="flex h-[11px] flex-1 items-center bg-[#2f2f2f]">Result</span></div>
<div class="mt-px flex h-[16px] w-[300px] shrink-0 items-center border border-[#181818] bg-[#222] pt-px pl-[2px] text-[7.900px] text-white">sqrt(vel1^2 + vel2^2)</div>
<div class="mt-[15px] grid h-[67px] w-[232px] shrink-0 grid-cols-5 grid-rows-5 gap-px bg-[#7a7a7a] p-px text-[6.400px] text-[#ddd] [&>b]:flex [&>b]:items-center [&>b]:justify-center [&>b]:bg-linear-to-b [&>b]:from-[#5a5a5a] [&>b]:to-[#4c4c4c] [&>b]:pt-px [&>b]:font-medium">
<b>Clear</b><b>(</b><b>)</b><b>iHat</b><b>jHat</b><b>sin</b><b>cos</b><b>tan</b><b>abs</b><b>sqrt</b><b>asin</b><b>acos</b><b>atan</b><b>ceil</b><b>floor</b><b>sinh</b><b>cosh</b><b>tanh</b><b>x^y</b><b>exp</b><b>dot</b><b>mag</b><b>norm</b><b>ln</b><b>log10</b></div>
<div class="mt-[3px] flex h-[12px] w-[300px] shrink-0"><span class="ml-[3px] flex w-[136px] items-center justify-between overflow-hidden rounded-[3px] bg-[#686868] pl-[6px]"><span class="pt-px">Scalars</span><svg class="h-[12px] w-[11px] rounded-[3px] bg-[#0d63e4]" viewBox="0 0 11 12"><path d="M3.500 5l2 2 2-2" stroke="#fff" fill="none"/></svg></span><span class="ml-px flex w-[136px] items-center rounded-[3px] bg-[#686868] pt-px pl-[5px]">Vectors</span></div>
<div class="mt-[6px] flex h-[13px] shrink-0 items-center"><svg class="mr-[3px] ml-px size-[8px] rounded-[2px] bg-[#0d73f0]" viewBox="0 0 8 8"><path d="M1.800 4l1.700 1.800L6.200 2" fill="none" stroke="#fff" stroke-width="1.200"/></svg><span class="tracking-[-.1px]">Replace Invalid Results</span></div>
<div class="mt-[3px] ml-[74px] h-px shrink-0 bg-[#222]"></div>
</div>
<div class="flex h-[230px] w-[9px] justify-center border-l border-[#777] bg-[#424242] pt-px"><i class="h-[30px] w-[5px] rounded-full bg-[#a9a9a9]"></i></div>
<div class="flex h-[9px] w-[213px] items-center bg-[#454545] pl-[2px]"><i class="h-[5px] w-[160px] rounded-full bg-[#a9a9a9]"></i></div>
<div class="h-[9px] w-[9px] border-l border-white bg-[#202020]"></div>
</div>
</aside>

<section class="flex w-[919px] flex-col">
<div class="flex h-[16px] shrink-0 items-start bg-linear-to-b from-[#373737] from-40% to-[#404040] to-40% font-medium">
<i class="mt-[6px] h-px w-[410px] bg-[#5a5a5a]"></i>
<div class="mt-px ml-[2px] flex h-[12px] w-[77px] items-center rounded-l-[3px] bg-[#0a66e6] pl-[2px] text-[7.800px] text-white"><svg class="mr-[7px] h-[10px] w-[10px]" viewBox="0 0 10 10"><rect x="1" y="1" width="8" height="8" fill="#1371e8" stroke="#073b86"/><path d="M1 2h8" stroke="#073b86" stroke-width="2"/></svg><span class="whitespace-nowrap">Layout #1</span><svg class="mr-[4px] ml-auto size-[9px]"><use href="#cx"/></svg></div>
<div class="mt-px flex h-[12px] w-[17px] items-center justify-center rounded-r-[3px] bg-[#6c6c6c]">+</div>
<i class="mt-[6px] ml-[2px] h-px flex-1 bg-[#5a5a5a]"></i>
</div>
<div class="flex h-[17px] shrink-0 items-center bg-[#363636] pr-px pl-[1.500px] [&>svg]:h-[11.500px] [&>svg]:w-[16.900px] [&>svg]:shrink-0">
<svg viewBox="0 0 20 20"><rect x="3" y="3" width="15" height="11" rx="2" fill="#bbb"/><circle cx="11" cy="8" r="4" fill="#e9f4fa"/><path d="M5 14c2-5 9-5 9 3" fill="none" stroke="#e22" stroke-width="2.500"/><path d="M2 12l1 7 5-3z" fill="#e22"/></svg>
<svg viewBox="0 0 20 20"><rect x="2" y="3" width="15" height="11" rx="2" fill="#696969"/><circle cx="9" cy="8" r="4" fill="#858585"/><path d="M6 17c0-7 7-7 9-3" fill="none" stroke="#5e7652" stroke-width="2.500"/><path d="M18 12l-1 7-5-3z" fill="#5e7652"/></svg>
<i class="mr-[2px] ml-px h-[14px] w-px border-l border-dotted border-[#5c5c5c]"></i>
<svg viewBox="0 0 20 20"><path d="M1 5V1h4M15 1h4v4M19 15v4h-4M5 19H1v-4" fill="none" stroke="#888"/><rect x="3" y="5" width="14" height="11" rx="2" fill="#bbb"/><circle cx="10" cy="10.500" r="4" fill="#e9f4fa" stroke="#777"/></svg>
<i class="mr-[2px] ml-px h-[14px] w-px border-l border-dotted border-[#5c5c5c]"></i>
<span class="w-[16.900px] shrink-0 text-center text-[6.500px] font-medium text-[#7c7b5c]">2D</span>
<svg viewBox="0 0 20 20"><rect x="1" y="3" width="16" height="11" rx="2" fill="#bbb"/><circle cx="9" cy="8" r="4" fill="#e9f4fa" stroke="#777"/><path d="M11 10l7 8" stroke="#e5a90e" stroke-width="2.500"/></svg>
<i class="mr-[2px] ml-px h-[14px] w-px border-l border-dotted border-[#5c5c5c]"></i>
<svg viewBox="0 0 20 20"><use href="#box"/><path d="M10 6v8M6 10h8" stroke="#a5d78e" stroke-width="3"/></svg>
<svg viewBox="0 0 20 20"><use href="#box"/><path d="M5 10h10" stroke="#f0202c" stroke-width="4"/></svg>
<svg viewBox="0 0 20 20"><use href="#box"/><path d="M10 4v6M7 7h6" stroke="#a5d78e" stroke-width="2.500"/><path d="M6 13h7" stroke="#f0202c" stroke-width="3.500"/><use href="#pt"/></svg>
<i class="mr-[2px] ml-px h-[14px] w-px border-l border-dotted border-[#5c5c5c]"></i>
<svg viewBox="0 0 20 20"><use href="#box"/><use href="#tg"/><use href="#pt"/></svg>
<svg viewBox="0 0 20 20"><use href="#box"/><use href="#to"/><use href="#pt"/></svg>
<svg viewBox="0 0 20 20"><path d="M2 7c2-4 6-4 8-5l7 3v8H4z" fill="#8bbd75"/><path d="M10 14l2 5" stroke="#999"/></svg>
<svg viewBox="0 0 20 20"><path d="M2 7c2-4 6-4 8-5l7 3v8H4zM8 13l8-8" fill="none" stroke="#999" stroke-width="1.500"/><circle cx="4" cy="13" r="2" fill="#dd4a36"/><path d="M10 14l2 5" stroke="#999"/></svg>
<svg viewBox="0 0 20 20"><use href="#box"/><path d="M11 5v10l-6-5zM13 4v4M13 12v4" fill="#a5d78e" stroke="#86976e"/></svg>
<svg viewBox="0 0 20 20"><path d="M3 3h3M8 3h3M14 4h3M4 8h3M9 7h3M14 9h3M6 12h3M12 11h3M3 15h3M10 15h3M15 14h3M6 18h3" stroke="#9d5043" stroke-width="1.800"/></svg>
<svg viewBox="0 0 20 20"><use href="#box"/><circle cx="7" cy="7" r="2" fill="#139bd7"/><circle cx="8" cy="14" r="2" fill="#139bd7"/><circle cx="13" cy="11" r="3" fill="#a5d78e"/><use href="#pt"/></svg>
<svg viewBox="0 0 20 20"><path d="M2 7l6-5h10v10l-5 6H2z" fill="#8e7307"/><path d="M2 7l6-5h10l-5 5z" fill="#c29e10"/></svg>
<svg viewBox="0 0 20 20"><circle cx="9" cy="9" r="2.500" fill="#a88716"/><use href="#pt"/></svg>
<svg viewBox="0 0 20 20"><use href="#tg"/><use href="#pt"/></svg>
<svg viewBox="0 0 20 20"><use href="#to"/><use href="#pt"/></svg>
<svg viewBox="0 0 20 20"><path d="M6 7l5 10H0z" fill="#a5d78e"/><use href="#q"/></svg>
<svg viewBox="0 0 20 20"><circle cx="5" cy="15" r="3.500" fill="#e13a30"/><use href="#q"/></svg>
<svg viewBox="0 0 20 20"><path d="M10 3v14M3 10h14" stroke="#236b8a" stroke-width="5"/></svg>
<svg viewBox="0 0 20 20"><path d="M3 10h14" stroke="#236b8a" stroke-width="4"/></svg>
<svg viewBox="0 0 20 20"><rect x="3" y="2" width="14" height="17" rx="2" fill="#686868"/><path d="M3 6h14" stroke="#444"/></svg>
<span class="mr-[7px] ml-auto text-[7.800px] font-extrabold text-[#eee] underline underline-offset-1">RenderView1</span>
<div class="flex h-[17px] gap-px [&>svg]:w-[16.700px] [&>svg]:border [&>svg]:border-[#686868] [&>svg]:bg-[#505050]">
<svg viewBox="0 0 16 16"><path d="M4 4h3.700v8H4zM8.500 4h3.700v8H8.500z" fill="#dce0f5"/></svg>
<svg viewBox="0 0 16 16"><path d="M4 4h8v3.700H4zM4 8.500h8v3.700H4z" fill="#dce0f5"/></svg>
<svg viewBox="0 0 16 16"><path d="M3.500 4h9v8.500h-9z" fill="#444" stroke="#292929"/><path d="M3 4h10" stroke="#292929" stroke-width="2"/></svg>
<svg viewBox="0 0 16 16"><circle cx="8" cy="8" r="3.500" fill="#2c2c2c"/><path d="M6 6l4 4M10 6l-4 4" stroke="#fff" stroke-width="1.500"/></svg>
</div>
</div>
<div class="ml-[2px] flex h-[440px] w-[916px] shrink-0 justify-center border-2 border-[#2f85cf] bg-white pt-[22px]">
<canvas id="field" width="394" height="393" class="h-[393px] w-[394px]"></canvas>
</div>
</section>
</div>

<footer class="flex h-[18px] shrink-0 items-start border-t border-[#666] bg-[#363636] pt-px">
<span class="ml-[384px] flex h-[13px] w-[12px] items-center justify-center bg-[#444] text-[8px] font-black text-[#d02833]">×</span>
<div class="ml-px h-[13px] w-[367px] border-t border-l border-t-[#666] border-l-[#ccc]"></div>
<div class="ml-[4px] flex h-[14px] w-[381px] items-center bg-[#202020]"><i class="h-[13px] w-[34px] border border-[#b4dcb4] bg-linear-to-b from-[#d7fcd5] to-[#bee6bd]"></i><span class="flex-1 pt-px pr-[33px] text-center text-[7.750px] font-medium text-[#eee]">ipsec-10-2-65-0.vpn.gatech.edu: 1.5 GiB/16.0 GiB 9.1%</span></div>
</footer>
</main>
</div>

<script>
// Velocity magnitude of a symmetric jet, drawn on a canvas. u is the distance from the axis.
const W = 394, H = 393, N = 198, cv = document.getElementById('field'), ctx = cv.getContext('2d');
const clamp = (v, a, b) => Math.max(a, Math.min(b, v));
const step = (a, b, v) => { const t = clamp((v - a) / (b - a), 0, 1); return t * t * (3 - 2 * t); };
function lerpPts(p, x) {
  if (x <= p[0][0]) return p[0][1];
  for (let i = 1; i < p.length; i++) if (x <= p[i][0]) {
    const t = (x - p[i-1][0]) / (p[i][0] - p[i-1][0]);
    return p[i-1][1] + t * (p[i][1] - p[i-1][1]);
  }
  return p[p.length-1][1];
}
const cols = [0,20,40,60,80,100,120,140,160,180,197];
const hot = [
 [0,[0,.13,.32,.49,.58,.63,.65,.62,.55,.51,.49]],
 [14,[.13,.21,.37,.51,.6,.65,.67,.63,.56,.5,.48]],
 [28,[.22,.28,.42,.54,.62,.67,.7,.66,.57,.49,.44]],
 [42,[.31,.36,.48,.59,.66,.69,.73,.7,.58,.46,.37]],
 [56,[.4,.44,.55,.65,.68,.7,.76,.74,.57,.4,.29]],
 [70,[.51,.53,.61,.69,.7,.7,.7,.66,.5,.32,.21]],
 [85,[.59,.61,.66,.7,.7,.6,.6,.5,.38,.24,.13]],
 [100,[.64,.65,.7,.7,.6,.5,.5,.4,.25,.14,.06]],
 [125,[.67,.67,.68,.7,.5,.4,.3,.22,.15,.06,.02]],
 [150,[.7,.7,.71,.6,.5,.4,.3,.2,.12,.08,.05]],
 [170,[.74,.74,.73,.6,.4,.3,.2,.1,.1,.1,.1]],
 [182,[.79,.81,.8,.6,.4,.3,.2,.1,.1,.1,.1]],
 [194,[.77,.8,.74,.5,.4,.3,.2,.1,.1,.1,.1]],
 [203,[.66,.63,.52,.4,.4,.3,.2,.1,.1,.1,.1]],
 [215,[.61,.57,.47,.35,.3,.3,.2,.1,.1,.1,.1]],
 [230,[.6,.58,.5,.44,.3,.3,.2,.1,.1,.1,.1]],
 [244,[.63,.63,.63,.55,.3,.3,.2,.1,.1,.1,.1]],
 [260,[.66,.68,.72,.72,.3,.3,.2,.1,.1,.1,.1]],
 [275,[.69,.71,.76,.7,.3,.3,.2,.1,.1,.1,.1]],
 [300,[.69,.69,.66,.6,.3,.3,.2,.1,.1,.1,.1]],
 [320,[.68,.67,.68,.6,.3,.3,.2,.1,.1,.1,.1]],
 [393,[.67,.66,.67,.6,.3,.3,.2,.1,.1,.1,.1]]];
const cold = [
 [40,[.2,.2,.28,.3,.35,.4,.45,.5,.57,.47,.38]],
 [70,[.2,.2,.26,.24,.29,.36,.42,.42,.46,.32,.21]],
 [85,[.2,.2,.25,.24,.28,.35,.38,.38,.36,.24,.13]],
 [100,[.18,.18,.23,.23,.27,.34,.35,.34,.26,.14,.06]],
 [125,[.18,.18,.23,.22,.25,.29,.29,.24,.15,.06,.02]],
 [150,[.16,.16,.21,.19,.2,.2,.18,.16,.12,.08,.05]],
 [175,[.15,.15,.19,.15,.15,.14,.13,.11,.08,.06,.05]],
 [200,[.4,.38,.28,.18,.12,.1,.08,.07,.05,.04,.04]],
 [225,[.4,.4,.36,.22,.12,.08,.05,.05,.04,.04,.03]],
 [250,[.4,.4,.38,.22,.11,.04,.02,.02,.03,.03,.03]],
 [275,[.25,.25,.28,.15,.09,.04,.02,.02,.02,.02,.02]],
 [300,[.18,.18,.18,.1,.06,.03,.02,.02,.02,.02,.02]],
 [325,[.1,.1,.1,.05,.03,.02,.015,.015,.01,.01,.01]],
 [393,[.05,.05,.05,.02,.01,0,0,0,0,0,0]]];
function table(t, u, y) {
  let i = 1; while (i < t.length - 1 && y > t[i][0]) i++;
  const f = clamp((y - t[i-1][0]) / (t[i][0] - t[i-1][0]), 0, 1);
  let c = 1; while (c < 10 && u > cols[c]) c++;
  const g = clamp((u - cols[c-1]) / (cols[c] - cols[c-1]), 0, 1);
  const r = k => t[k][1][c-1] + g * (t[k][1][c] - t[k][1][c-1]);
  return r(i-1) + f * (r(i) - r(i-1));
}
// The stagnation zone at the top is elliptical and merges into the table outside it.
function hotAt(u, y) {
  const r = Math.hypot(u / 63, y / 68);
  const core = .5 * Math.pow(Math.hypot(r, .08), .95) - .03 * (1 - Math.min(r, 1));
  const w = step(.8, 1.4, r);
  return core * (1 - w) + table(hot, u, y) * w;
}
const edge = [[40,60],[54,56],[64,53],[75,48],[88,43],[100,37.5],[107,36],[115,35.5],[130,38],[140,37.5],[150,35.5],[160,35],[170,34],[180,30],[187,27.5],[195,27],[203,30],[215,37],[227,43],[237,48],[244,50.500],[252,50.500],[258,49],[268,44],[277,38.500],[287,37],[294,36.500],[302,37],[310,39.5],[393,39.7]];
const soft = [[0,4],[60,4],[100,3],[185,3],[192,5],[200,9],[212,14],[225,13],[237,8],[248,4],[260,3],[300,2],[393,1.500]];
const roof = [[56,54],[76,53],[85,51],[94,47],[101,43.500],[107,42],[114,43],[121,47],[128,54],[134,61],[142,67],[152,72],[165,78]];
// Features: value, width, strength, x/y points at three units per pixel (axis at x = 632).
const strokes = [
 [.5,38,.85,[318,180]],
 [.17,18,.75,[188,250,190,285,210,318,240,340,275,345,308,332,330,300]],
 [.3,22,.45,[235,262,250,300,285,320,320,300,325,275]],
 [.46,12,.4,[174,250,180,300,212,345]],
 [.48,19,.75,[265,366,290,366,325,354,350,335,365,315]],
 [.52,19,.75,[365,315,374,290,374,262,360,235]],
 [.64,18,.85,[350,222,325,208,300,204,275,206]],
 [.5,17,.8,[265,210,245,222,234,245,236,275]],
 [.44,20,.6,[270,245,298,240,320,258,328,285,318,310]],
 [.48,14,.6,[205,230,245,208,265,195]],
 [.19,28,.7,[262,298]],
 [0,10,.9,[285,285]],
 [.15,22,.75,[402,190]],
 [.87,36,.7,[268,150]],
 [.82,28,.6,[292,136]],
 [.85,27,.8,[424,154]],
 [.77,28,.7,[495,245]],
 [.93,22,.85,[532,318]],
 [.88,20,.75,[535,457]],
 [1.06,17,1,[573,573,573,588]],
 [.9,34,.5,[573,580]],
 [0,14,.6,[502,318]],
 [0,14,.7,[506,447]],
 [0,17,.75,[505,565]],
 [.03,13,.7,[525,578]],
 [.82,24,.7,[497,788]],
 [1,19,.9,[531,862]],
 [.84,45,.45,[540,862]],
 [-.04,10,1,[471,806]],
 [.05,12,.5,[507,856]],
 [0,14,.6,[505,962]],
 [.76,18,.6,[526,975]],
 [0,60,.7,[345,792]],
 [0,40,.5,[45,400]]];
function dist(p, x, y) {
  if (p.length < 4) return Math.hypot(x - p[0], y - p[1]);
  let m = 1e9;
  for (let i = 0; i < p.length - 2; i += 2) {
    const dx = p[i+2] - p[i], dy = p[i+3] - p[i+1];
    const t = clamp(((x - p[i]) * dx + (y - p[i+1]) * dy) / (dx * dx + dy * dy), 0, 1);
    m = Math.min(m, Math.hypot(x - p[i] - t * dx, y - p[i+1] - t * dy));
  }
  return m;
}
let F = new Float32Array(N * H);
for (let y = 0; y < H; y++) {
  const e = lerpPts(edge, y), s = lerpPts(soft, y);
  for (let u = 0; u < N; u++) {
    const x3 = 632 - u * 3, y3 = y * 3 + 18;
    const yb = lerpPts(roof, u);
    const inJet = 1 - step(e - s, e + s, u);
    const w = 4 + Math.max(0, u - 135) * .6;
    const m = Math.max(inJet, 1 - step(yb - w, yb + w, y));
    let f = table(cold, u, y) * (1 - m) + hotAt(u, y) * m;
    for (const [v, wd, st, p] of strokes) {
      const d = dist(p, x3, y3);
      if (d > wd * 3.5) continue;
      let a = st * Math.exp(-Math.pow(d / wd, 1.6));
      if (v > .7) a *= m;
      if (v < .2) a *= 1 - m;
      f += (v - f) * a;
    }
    F[y * N + u] = f;
  }
}
// Two smoothing passes over the field; the column at the axis mirrors into itself.
for (let pass = 0; pass < 2; pass++) {
  const G = new Float32Array(N * H);
  for (let y = 0; y < H; y++) for (let u = 0; u < N; u++) {
    let sum = 0;
    for (let j = -1; j <= 1; j++) for (let i = -1; i <= 1; i++)
      sum += F[clamp(y + j, 0, H - 1) * N + Math.min(Math.abs(u + i), N - 1)];
    G[y * N + u] = sum / 9;
  }
  F = G;
}
const ramp = [[0,56,60,160],[.05,65,77,171],[.12,78,100,185],[.2,97,126,198],[.3,125,154,205],[.4,155,174,204],[.5,184,181,171],[.58,203,166,143],[.67,206,136,110],[.76,201,112,85],[.84,199,84,62],[.92,187,52,48],[1,166,0,30]];
const img = ctx.createImageData(W, H);
for (let y = 0; y < H; y++) for (let k = 0; k < N; k++) {
  const f = F[y * N + k];
  let i = 1; while (i < ramp.length - 1 && f > ramp[i][0]) i++;
  const t = clamp((f - ramp[i-1][0]) / (ramp[i][0] - ramp[i-1][0]), 0, 1);
  for (const px of [197 - k, 197 + k]) {
    if (px < 0 || px >= W) continue;
    const o = (y * W + px) * 4;
    for (let c = 0; c < 3; c++) img.data[o + c] = ramp[i-1][c+1] + t * (ramp[i][c+1] - ramp[i-1][c+1]);
    img.data[o + 3] = 255;
  }
}
ctx.putImageData(img, 0, 0);
</script>
</body>
</html>
